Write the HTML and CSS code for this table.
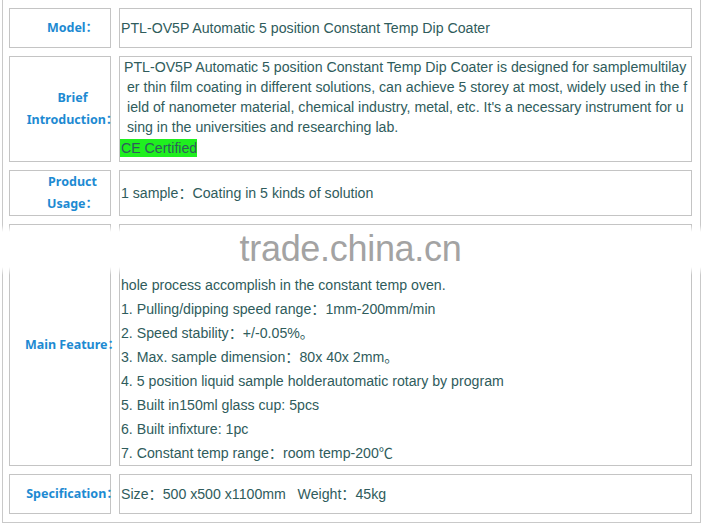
FILE: index.html
```html
<!DOCTYPE html>
<html>
<head>
<meta charset="utf-8">
<link rel="stylesheet" href="styles.css">
</head>
<body>
<div class="sheet">
  <div class="label"><span>Model：</span></div>
  <div class="value single">PTL-OV5P Automatic 5 position Constant Temp Dip Coater</div>

  <div class="label"><span>Brief<br>Introduction：</span></div>
  <div class="value intro">
    <div class="ln first">PTL-OV5P Automatic 5 position Constant Temp Dip Coater is designed for samplemultilay</div>
    <div class="ln cont">er thin film coating in different solutions, can achieve 5 storey at most, widely used in the f</div>
    <div class="ln cont">ield of nanometer material, chemical industry, metal, etc. It's a necessary instrument for u</div>
    <div class="ln cont">sing in the universities and researching lab.</div>
    <div class="ln"><span class="ce">CE Certified</span></div>
  </div>

  <div class="label"><span>Product<br>Usage：</span></div>
  <div class="value middle">1 sample：Coating in 5 kinds of solution</div>

  <div class="label"><span>Main Feature：</span></div>
  <div class="value feature">
    <div class="fl"></div>
    <div class="fl"></div>
    <div class="fl">hole process accomplish in the constant temp oven.</div>
    <div class="fl">1. Pulling/dipping speed range：1mm-200mm/min</div>
    <div class="fl">2. Speed stability：+/-0.05%。</div>
    <div class="fl">3. Max. sample dimension：80x 40x 2mm。</div>
    <div class="fl">4. 5 position liquid sample holderautomatic rotary by program</div>
    <div class="fl">5. Built in150ml glass cup: 5pcs</div>
    <div class="fl">6. Built infixture: 1pc</div>
    <div class="fl">7. Constant temp range：room temp-200℃</div>
  </div>

  <div class="label"><span>Specification：</span></div>
  <div class="value single">Size：500 x500 x1100mm&nbsp;&nbsp; Weight：45kg</div>

  <div class="watermark"><span>trade.china.cn</span></div>
</div>
</body>
</html>
```

FILE: styles.css
```css
html, body {
  margin: 0;
  padding: 0;
  background: #ffffff;
}

body {
  font-family: "Liberation Sans", Arial, "Noto Sans CJK SC", sans-serif;
}

.sheet {
  position: relative;
  box-sizing: border-box;
  width: 699px;
  margin-left: 2px;
  padding: 8px 8px 8px 6px;
  border-left: 1px solid #c9c9c9;
  border-right: 1px solid #c9c9c9;
  border-bottom: 1px solid #c9c9c9;
  display: grid;
  grid-template-columns: 102px 573px;
  column-gap: 8px;
  row-gap: 8px;
}

.label {
  border: 1px solid #c4c4c4;
  display: flex;
  align-items: center;
  justify-content: center;
  padding: 0 0 0 25px;
  font-family: "Noto Sans", "Noto Sans CJK SC", sans-serif;
  font-weight: bold;
  font-size: 12.5px;
  line-height: 22px;
  color: #1d8ad2;
  min-width: 0;
}

.label span {
  flex: none;
  white-space: nowrap;
  text-align: center;
}

.value {
  border: 1px solid #c4c4c4;
  font-size: 14.15px;
  color: #2f5c5c;
  min-width: 0;
  overflow: hidden;
}

.single {
  line-height: 20px;
  padding: 9px 0 9px 1px;
  white-space: nowrap;
}

.middle {
  display: flex;
  align-items: center;
  padding-left: 1px;
  line-height: 20px;
}

.intro {
  padding: 0 0 4px 0;
}

.ln {
  line-height: 20px;
  height: 20px;
  white-space: nowrap;
  overflow: hidden;
}

.ln.first {
  padding-left: 4px;
}

.ln.cont {
  padding-left: 7px;
}

.ce {
  display: inline-block;
  margin-top: 2px;
  height: 19px;
  line-height: 19px;
  background: #1fef1f;
  padding-left: 1px;
}

.feature {
  padding-left: 1px;
}

.fl {
  height: 24px;
  line-height: 24px;
  white-space: nowrap;
}

.watermark {
  position: absolute;
  left: -3px;
  right: -3px;
  top: 225px;
  height: 50px;
  background: linear-gradient(to bottom, rgba(255,255,255,0) 0, #fff 7px, #fff 42px, rgba(255,255,255,0) 50px);
  display: flex;
  justify-content: center;
  align-items: center;
  pointer-events: none;
}

.watermark span {
  font-family: "Liberation Sans", Arial, sans-serif;
  font-size: 36px;
  color: #a3a3a3;
  margin-left: -2px;
  margin-top: -2px;
  letter-spacing: -0.3px;
}
```
